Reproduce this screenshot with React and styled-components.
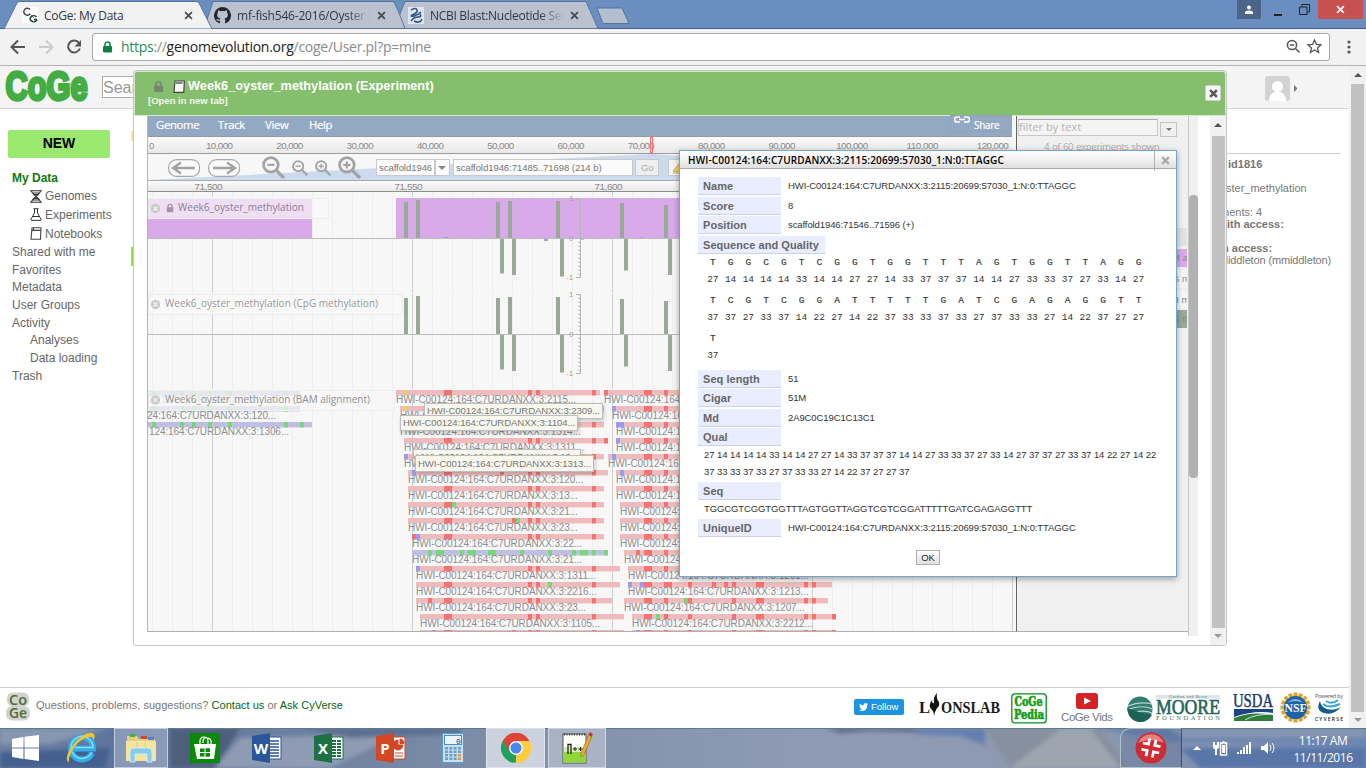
import React from "react";
import styled, { createGlobalStyle, css } from "styled-components";

const sans = '"Liberation Sans", Arial, sans-serif';
const ui = '"Open Sans", "Noto Sans", sans-serif';
const mono = '"Liberation Mono", monospace';

const Global = createGlobalStyle`
  *{box-sizing:border-box}
  html,body{margin:0;padding:0;overflow:hidden}
  body{font-family:${sans};background:#fff}
  svg{display:block;flex:none}
`;

const Screen = styled.div`
  position: relative; width: 1366px; height: 768px; overflow: hidden;
  display: flex; flex-direction: column; background: #fff; white-space: nowrap;
`;

/* ---------- browser chrome ---------- */
const TabStrip = styled.div`
  height: 29px; background: #6a8ebf; border-bottom: 1px solid #3f5f8d; display: flex; position: relative; flex: none;
`;
const TabShapes = styled.svg`position: absolute; left: 0; top: 0;`;
const Tabs = styled.div`position: relative; display: flex; padding-left: 22px; height: 29px; align-items: center;`;
const Tab = styled.div`
  width: ${(p) => p.$w}px; display: flex; align-items: center; gap: 6px; padding-top: 1px;
  font: 12px ${ui}; letter-spacing: ${(p) => p.$ls || 0}px; color: #33373d;
`;
const TabTitle = styled.span`
  width: ${(p) => p.$w}px; overflow: hidden;
  ${(p) => p.$fade && css`-webkit-mask-image: linear-gradient(90deg, #000 82%, transparent 100%);`}
`;
const WindowControls = styled.div`margin-left: auto; display: flex; padding-right: 3px; position: relative;`;
const WinBtn = styled.div`
  width: ${(p) => p.$w}px; height: 19px; display: flex; align-items: center; justify-content: center; background: ${(p) => p.$bg || "none"};
`;
const Toolbar = styled.div`
  height: 37px; flex: none; background: #f2f2f2; border-bottom: 1px solid #b4b4b4;
  display: flex; align-items: center; padding: 0 12px 1px 10px;
`;
const NavIcons = styled.div`display: flex; gap: 12px; width: 82px;`;
const Omnibox = styled.div`
  width: 1238px; height: 28px; border: 1px solid #a9a9a9; border-radius: 3px; background: #fff;
  display: flex; align-items: center; padding: 0 7px 0 10px;
`;
const Url = styled.div`font: 14px ${ui}; letter-spacing: -0.27px; color: #8a8a8a; margin-left: 9px; flex: 1;
  b { font-weight: 400; color: #222; } i { font-style: normal; color: #2f8a5a; }`;
const Dots = styled.div`margin-left: auto; padding-right: 3px;`;

/* ---------- page ---------- */
const Page = styled.div`height: 662px; display: flex; flex: none;`;
const PageMain = styled.div`width: 1349px; display: flex; flex-direction: column;`;
const Header = styled.div`
  height: 43px; flex: none; background: #f4f4f4; border-bottom: 1px solid #d4d4d4; display: flex; align-items: center; padding-left: 4px;
`;
const SearchBox = styled.div`
  width: 120px; height: 22px; margin: 0 0 1px 12px; border: 1px solid #adadad; background: #fff; font: 16px/21px ${sans}; color: #999;
`;
const Account = styled.div`margin-left: auto; padding: 3px 52px 0 0; display: flex; gap: 4px; align-items: center;`;
const Content = styled.div`height: 578px; display: flex;`;
const Sidebar = styled.div`width: 131px; padding: 21px 0 0 8px;`;
const NewButton = styled.div`
  width: 102px; height: 28px; border-radius: 2px; background: #9be86e; font: bold 14px/27px ${sans}; text-align: center; color: #000; margin-bottom: 11px;
`;
const MenuItem = styled.div`
  height: ${(p) => (p.$tall ? 18.8 : 17.7)}px; display: flex; align-items: center; gap: 3px; padding-left: ${(p) => [4, 22][p.$level]}px;
  font: ${(p) => (p.$active ? "bold" : "normal")} 12px ${sans}; color: ${(p) => (p.$active ? "#117a11" : "#666")};
`;
const Gutter = styled.div`width: 3px; padding-top: 22px; display: flex; flex-direction: column; gap: 106px;`;
const Chip = styled.div`height: ${(p) => p.$h}px; background: ${(p) => p.$c};`;
const InfoPane = styled.div`
  margin-left: auto; width: 123px; padding: 44px 8px 0 0; overflow: hidden; font: 11px/12px ${sans}; color: #777;
`;
const InfoRule = styled.div`height: 1px; background: #cfcfcf; margin-bottom: 4px;`;
const InfoLine = styled.div`height: 12px; margin-left: ${(p) => p.$x || 0}px; font-weight: ${(p) => (p.$b ? 700 : 400)}; letter-spacing: ${(p) => p.$ls || 0}px;`;
const Footer = styled.div`
  height: 41px; border-top: 1px solid #cfcfcf; display: flex; align-items: center; padding: 0 0 3px 6px;
`;
const FooterText = styled.div`
  width: 824px; font: 11px ${sans}; letter-spacing: 0.02px; color: #777; padding: 0 0 3px 6px; a { color: #0a660a; }
`;
const Sponsors = styled.div`display: flex; align-items: flex-start; height: 33px;`;
const Slot = styled.div`width: ${(p) => p.$w}px; padding-top: ${(p) => p.$t || 0}px;`;
const Follow = styled.div`
  width: 50px; height: 16px; border-radius: 2px; background: #1b95e0; color: #fff; font: 9.5px/16px ${sans};
  display: flex; align-items: center; gap: 3px; padding-left: 5px;
`;
const PageScroll = styled.div`width: 17px; background: #f1f1f1; display: flex; flex-direction: column; align-items: center; padding: 7px 0 6px 0;`;
const Thumb = styled.div`width: ${(p) => p.$w}px; flex: 1; margin: ${(p) => p.$m}; background: ${(p) => p.$c || "#c1c1c1"};`;

/* ---------- experiment dialog ---------- */
const Dialog = styled.div`
  position: absolute; left: 133px; top: 70px; width: 1094px; height: 576px; background: #fff;
  border: 1px solid #c6c6c6; border-radius: 3px; display: flex; flex-direction: column;
`;
const DialogHead = styled.div`
  height: 45px; flex: none; background: #85be6c; border: 1px solid #d5e8cc; border-radius: 3px 3px 0 0;
  display: flex; justify-content: space-between; padding: 6px 4px 0 13px; color: #fff;
`;
const DialogTitle = styled.div`display: flex; align-items: center; font: bold 12.75px/16px ${sans}; padding-left: 6px; height: 16px;`;
const TitleGap = styled.span`width: ${(p) => p.$w}px;`;
const NewTabLink = styled.div`font: bold 9.5px/14px ${sans}; color: #f1f8ec;`;
const CloseBtn = styled.div`
  width: 16px; height: 16px; margin-top: 7px; border: 1px solid #d0d0d0; border-radius: 2px; background: #f5f5f5; display: flex; align-items: center; justify-content: center;
`;
const DialogBody = styled.div`flex: 1; display: flex; padding-left: 13px; height: 529px;`;
const Browser = styled.div`width: 870px; border-left: 1px solid #b5b5b5; height: 516px; border-bottom: 1px solid #b0b0b0; border-right: 1px solid #666; background: #f7f7f7;`;
const MenuBar = styled.div`
  width: 864px; height: 21px; background: #93a9c3; border-bottom: 1px solid #999; display: flex; align-items: center; padding: 0 0 3px 8px;
  font: 11.3px ${ui}; letter-spacing: -.3px; color: #fff;
`;
const MenuEntry = styled.span`width: ${(p) => p.$w}px; -webkit-text-stroke: .2px #fff;`;
const Share = styled.span`
  margin-left: auto; width: 62px; height: 17px; border: 1px solid #8ca2bd; margin-bottom: 3px; font-size: 10px; display: flex; gap: 4px; padding: 0 0 0 3px; line-height: 18px; -webkit-text-stroke: .2px #fff;
`;
const NavBox = styled.div`position: relative; height: 27px; border-bottom: 1px solid #aaa; overflow: hidden;`;
const Highlight = styled.svg`position: absolute; left: 0; top: 0;`;
const NavRow = styled.div`position: relative; display: flex; align-items: center; height: 26px; padding: 1px 0 0 20px;`;
const Magnifiers = styled.div`display: flex; align-items: center; width: 114px; margin-left: 14px; gap: 7px; flex: none;`;
const Field = styled.div`
  width: ${(p) => p.$w}px; height: 17px; flex: none; margin-right: ${(p) => p.$mr || 0}px; background: ${(p) => p.$bg || "#fbfbfb"}; border: 1px solid #c9c9c9;
  font: 9.5px/15px ${sans}; color: ${(p) => p.$c || "#777"}; padding-left: ${(p) => p.$pl || 2}px; display: flex; align-items: center; letter-spacing: -.05px; white-space: nowrap;
`;
const TrackSelector = styled.div`width: 171px; height: 516px; background: #f0f0f0; border-bottom: 1px solid #b0b0b0; padding: 3px 0 0 1px;`;
const FilterRow = styled.div`display: flex; gap: 2px; align-items: flex-start;`;
const FilterInput = styled.div`width: 140px; height: 17px; border: 1px solid #c8c8c8; border-top-color:#aaa; background: #f4f4f4; font: 11px/14px ${ui}; letter-spacing: .05px; color: #b5b5b5;`;
const DropBtn = styled.div`width: 17px; height: 15px; margin-top: 3px; border: 1px solid #c4c4c4; display: flex; align-items: center; justify-content: center;`;
const Shown = styled.div`font: 9.8px/13px ${ui}; color: #aaa; padding: 3px 0 0 26px; margin-bottom: 1px; letter-spacing: -.43px; word-spacing: .6px;`;
const FacetRow = styled.div`
  height: 18px; margin: ${(p) => p.$mt}px 1px 0 154px; background: ${(p) => p.$bg}; font: 9.5px/18px ${sans}; color: #8a8a8a; overflow: hidden;
`;
const InnerScroll = styled.div`width: 10px; height: 520px; background: #f0f0f0; border-left: 1px solid #c8c8c8; padding-top: 79px; display: flex; flex-direction: column;`;
const InnerThumb = styled.div`height: 283px; background: #b1b1b1; border-radius: 4px;`;
const DialogScroll = styled.div`width: 16px; margin-left: auto; background: #f1f1f1; display: flex; flex-direction: column; align-items: center; padding: 7px 0 7px;`;

/* ---------- feature tooltips ---------- */
const Tip = styled.div`
  position: absolute; left: ${(p) => p.$x}px; top: ${(p) => p.$y}px; width: ${(p) => p.$w}px; height: ${(p) => p.$h || 16}px; overflow: hidden;
  background: #f7f7ee; border: 1px solid #bdbdbd; box-shadow: 1px 2px 4px rgba(0,0,0,.2); font: 9.6px/${(p) => p.$lh || 14}px ${sans}; letter-spacing: -.09px; color: #777; padding-left: 2px;
`;

/* ---------- feature detail popup ---------- */
const Popup = styled.div`
  position: absolute; left: 679px; top: 150px; width: 498px; height: 427px; background: #fff; border: 1px solid #74a5cc;
  box-shadow: 0 2px 6px rgba(0,0,0,.35); display: flex; flex-direction: column;
`;
const PopupHead = styled.div`
  height: 18px; flex: none; border-bottom: 1px solid #a9a9a9; background: linear-gradient(#fff, #f3f3f3 45%, #dedede);
  display: flex; justify-content: space-between; padding-left: 8px; font: 600 10px/19px ${ui}; color: #000; letter-spacing: .14px;
`;
const PopupClose = styled.div`width: 22px; height: 20px; border-left: 1px solid #b0b0b0; padding: 5px 0 0 6px;`;
const PopupBody = styled.div`padding: 8px 0 0 18px; display: flex; flex-direction: column; align-items: flex-start;`;
const Row = styled.div`display: flex; height: ${(p) => p.$h}px; margin-top: ${(p) => p.$mt || 0}px;`;
const Key = styled.div`
  width: ${(p) => p.$w || 83}px; height: 18px; background: #e9edff; border-bottom: 1px solid #cdd2e4; font: bold 11px/18px ${sans};
  letter-spacing: .05px; color: #666; padding-left: 5px;
`;
const Value = styled.div`font: 9.5px/17px ${sans}; letter-spacing: -.1px; color: #333; padding-left: 7px;`;
const Block = styled.div`font: 9.5px/17px ${sans}; letter-spacing: ${(p) => p.$ls}px; color: #333; padding-left: 6px; height: ${(p) => p.$h}px;`;
const SeqGrid = styled.div`
  display: grid; grid-template-columns: repeat(25, 17.74px); grid-template-rows: 17px 17px; align-content: start; padding: 0 0 0 6px; text-align: center; height: 38px; color: #333;
`;
const Base = styled.span`grid-row: 1; font: 9.5px/17px ${mono}; -webkit-text-stroke: .15px #333;`;
const Qv = styled.span`grid-row: 2; font: 9.5px/17px ${mono};`;
const Ok = styled.div`
  width: 24px; height: 15px; margin: 12px 0 0 218px; border: 1px solid #b0b0b0; background: linear-gradient(#fff,#e0e0e0); font: 9.5px/14px ${sans}; text-align: center; color: #222;
`;

/* ---------- taskbar ---------- */
const Taskbar = styled.div`position: relative; height: 40px; flex: none; overflow: hidden; background: #8493ad;`;
const Wallpaper = styled.svg`position: absolute; left: 0; top: 0;`;
const TaskRow = styled.div`position: relative; display: flex; height: 40px;`;
const Task = styled.div`
  width: ${(p) => p.$w}px; display: flex; align-items: center; justify-content: center; margin-right: ${(p) => p.$mr || 0}px; border: 1px solid transparent;
  ${(p) => p.$open && css`background: rgba(255,255,255,${p.$open}); border-color: rgba(235,240,248,.6);`}
`;
const TrayApp = styled.div`
  width: 62px; height: 40px; margin-right: 4px; display: flex; align-items: center; justify-content: center; border: 1px solid rgba(235,240,248,.55);
  border-right-color: rgba(40,55,80,.7); border-radius: 10px 0 0 0; background: rgba(60,80,115,.18);
`;
const Tray = styled.div`margin-left: auto; display: flex; align-items: center;`;
const Clock = styled.div`font: 12px/17px ${ui}; letter-spacing: -.45px; color: #fff; text-align: center; width: 62px; margin: 1px 12px 0 12px;`;

/* ---------- small drawings ---------- */
const Arrow = ({ d = "down", c = "#555", s = 8 }) => {
  const pts = { down: "0,0 8,0 4,4", up: "0,4 8,4 4,0", right: "0,0 4,4 0,8" }[d];
  return <svg width={d === "right" ? s / 2 : s} height={d === "right" ? s : s / 2} viewBox={d === "right" ? "0 0 4 8" : "0 0 8 4"}><polygon points={pts} fill={c} /></svg>;
};
const Cross = ({ s = 8, c = "#666", w = 2 }) => (
  <svg width={s} height={s} viewBox="0 0 8 8"><path d="M1 1L7 7M7 1L1 7" stroke={c} strokeWidth={w} /></svg>
);
const Lock = ({ w = 9, h = 11, c = "#77856f" }) => (
  <svg width={w} height={h} viewBox="0 0 9 11"><rect x="0" y="4.5" width="9" height="6.5" rx="1" fill={c} /><path d="M2 5V3a2.5 2.4 0 0 1 5 0v2" fill="none" stroke={c} strokeWidth="1.5" /></svg>
);
const GenomeIcon = () => (
  <svg width="12" height="13" viewBox="0 0 12 13"><path d="M0 .7H12M0 12.3H12M1.5 1C2 5 10 8 10.5 12M10.5 1C10 5 2 8 1.5 12M2.5 3H9.5M2.5 10H9.5M4 4.5h4M4 8.5h4" stroke="#333" strokeWidth="1.1" fill="none" /></svg>
);
const FlaskIcon = () => (
  <svg width="12" height="13" viewBox="0 0 12 13"><path d="M3.5 .7H8.5M4.5 1V5L.8 11.5Q.8 12.4 2 12.4H10Q11.2 12.4 11.2 11.5L7.5 5V1M2.8 8.5H9.2" stroke="#333" fill="none" /></svg>
);
const BookIcon = () => (
  <svg width="12" height="13" viewBox="0 0 12 13"><path d="M2 .8H11L10.5 12.2H1ZM2 3.4H10.5M3.5 1V3.4" stroke="#444" strokeWidth="1.1" fill="none" /></svg>
);
const BookSolid = () => (
  <svg width="12" height="13" viewBox="0 0 12 13"><path d="M2 1H11.3L10.8 12.3H1Z" fill="#fafafa" stroke="#444" strokeWidth="1.2" /><path d="M3 3H9.5" stroke="#444" strokeWidth="1.3" /></svg>
);
const Magnifier = ({ s, plus }) => (
  <svg width={s} height={s} viewBox="0 0 22 22">
    <circle cx="8.5" cy="8.5" r="7" fill="none" stroke="#a3a3a3" strokeWidth="2.6" />
    <path d={`M5 8.5H12${plus ? "M8.5 5V12" : ""}`} stroke="#a3a3a3" strokeWidth="2" /><path d="M13.5 13.5L21 21" stroke="#a3a3a3" strokeWidth="3" />
  </svg>
);
const PanArrow = ({ flip }) => (
  <svg width="40" height="18" viewBox="0 0 40 18"><rect x=".6" y=".6" width="31" height="16.8" rx="8" fill="#fafafa" stroke="#a8a8a8" strokeWidth="1.2" />
    <path d="M5 9H27M13 3.5L5 9L13 14.5" transform={flip ? "translate(32 0) scale(-1 1)" : undefined} stroke="#a3a3a3" strokeWidth="2.4" fill="none" /></svg>
);

const T = ({ x, y, w, s = 10, f = ui, c = "#8a8a8a", b, children, ...r }) => (
  <text x={x} y={y} fontSize={s} fontFamily={f} fill={c} fontWeight={b} textLength={w} {...r}>{children}</text>
);

/* ---------- rulers and tracks ---------- */
const Overview = () => (
  <svg width="864" height="17">
    <defs><linearGradient id="rule" x2="0" y2="1"><stop offset="0" stopColor="#fafafa" /><stop offset="1" stopColor="#e9e9e9" /></linearGradient></defs>
    <rect width="864" height="16" fill="url(#rule)" /><rect y="16" width="864" height="1" fill="#9c9c9c" />
    <T x="1" y="12" f={sans} s="9.5">0</T>
    {Array.from({ length: 12 }, (_, i) => (
      <T key={i} x={71.5 + i * 70.3} y="12" w={i > 8 ? 32 : 27} s="9.8" f={sans} textAnchor="middle">{`${(i + 1) * 10},000`}</T>
    ))}
    <rect x="502.5" y=".5" width="2" height="15.5" fill="none" stroke="#fb6d6d" />
  </svg>
);
const Ruler = () => (
  <svg width="868" height="11">
    <rect width="868" height="10" fill="url(#rule)" /><rect y="10" width="868" height="1" fill="#8f8f8f" />
    {["71,500", "71,550", "71,600"].map((l, i) => <T key={l} x={60.5 + i * 200} y="9.3" w="28" s="9.8" f={sans} textAnchor="middle">{l}</T>)}
  </svg>
);

const upBars = [[404, 202], [416, 200], [496, 202], [508, 201], [556, 201], [620, 203], [664, 205]];
const downBars = [[500, 273.5], [512, 275], [560, 276.5], [624, 270.5], [668, 275]];
const Methylation = ({ dy }) => (
  <g transform={`translate(0 ${dy})`}>
    {upBars.map(([x, y]) => <rect key={x} x={x} y={y} width="4" height={238 - y} fill="#98a997" />)}
    {downBars.map(([x, y]) => <rect key={x} x={x} y="239" width="4" height={y - 239} fill="#98a997" />)}
    <rect x="148" y="238" width="869" height="1" fill="#bdbdbd" />
    <g stroke="#b4b4b4"><path d="M580.5 198.5V277.5M576 198.5h5M576 238.5h5M576 277.5h5" fill="none" />
      {Array.from({ length: 19 }, (_, i) => <path key={i} d={`M578.5 ${202.5 + i * 4}h2`} />)}</g>
    <T x="569" y="201" s="8" f={sans} c="#b99a80">1</T><T x="569" y="241" s="8" f={sans} c="#a8a0a8">0</T><T x="566" y="280" s="8" f={sans} c="#b99a80">-1</T>
  </g>
);

const P = "#eebcbc", V = "#bfbfe4", R = "#f97272", G = "#76d876", B = "#9a9af5", Y = "#e3d070";
const reds1 = [[444, 8], [528, 4], [536, 4], [592, 4]];
const reds2 = [[644, 8], [664, 4], [756, 8], [804, 4], [812, 4]];
const col1 = [
  [396, 600, "2115", [[404, 4, Y]]], [400, 604, "2309", [[404, 4, Y]]], [400, 604, "1314", []], [404, 608, "1311", [[604, 4, R]]],
  [404, 604, "1313", [[404, 4, B]]], [408, 608, "120", [[412, 4, B], [500, 4, R]]], [408, 604, "13", []], [408, 604, "21", [[452, 4, G]]],
  [408, 604, "23", [[512, 4, R], [516, 4, G]]], [412, 604, "22", [[412, 4, R], [416, 4, B]]],
  [412, 608, "21", [[428, 4, G], [436, 8, G], [460, 4, G], [468, 8, G], [488, 8, G], [520, 4, G], [548, 4, G], [572, 4, G], [580, 8, G], [592, 4, G], [604, 4, G]], V],
  [416, 620, "1311", [[416, 4, B]]], [416, 620, "2216", [[548, 4, G]]], [416, 612, "23", [[428, 4, R]]], [420, 624, "1105", []], [420, 624, "", [[432, 4, B], [512, 4, R]]],
];
const col2 = [
  [604, 800, "1101", [[604, 4, R]]], [612, 812, "1102", [[612, 4, B]]], [616, 820, "1106", [[616, 8, B]]], [616, 820, "1108", [[616, 4, B]]],
  [608, 812, "1204", [[612, 4, B]]], [616, 820, "1205", [[620, 4, B]]], [616, 820, "1206", []], [620, 824, "1207", []], [620, 824, "1208", []], [620, 824, "1209", []],
  [624, 828, "1210", [[636, 4, R]]], [628, 832, "1201", []], [628, 832, "1213", [[628, 4, B], [640, 4, B], [668, 4, R], [688, 4, R], [712, 4, R], [724, 4, R], [732, 4, R]]],
  [624, 828, "1207", [[684, 4, G], [688, 4, R], [732, 4, R]]], [632, 836, "2212", [[656, 4, G], [688, 4, R], [732, 4, R], [832, 4, R]]], [632, 836, "", [[636, 4, B], [688, 4, R], [732, 4, R], [832, 4, R]]],
];
const Reads = ({ rows, reds }) => rows.map(([a, b, id, marks, color], k) => {
  const y = 390 + k * 16;
  return (
    <g key={k}>
      <rect x={a} y={y} width={b - a} height="5.4" fill={color || P} />
      {!color && reds.map(([x, w]) => <rect key={x} x={x} y={y} width={w} height="5.4" fill={R} />)}
      {marks.map(([x, w, c], i) => <rect key={i} x={x} y={y} width={w} height="5.4" fill={c} />)}
      {id && <text x={a} y={y + 12.8} fontFamily={sans} fontSize="10" fill="#8f8f8f" letterSpacing="-.08">{`HWI-C00124:164:C7URDANXX:3:${id}...`}</text>}
    </g>
  );
});
const greens = [152, 180, 192, 208, 228, 284];
const Disc = ({ y }) => (
  <g><circle cx="155.5" cy={y} r="4.5" fill="#c9c6cb" /><path d={`M153.5 ${y - 2}l4 4m0-4l-4 4`} stroke="#f4f4f4" strokeWidth="1.3" /></g>
);
const Tracks = () => (
  <svg width="868" height="439" viewBox="148 192 868 439">
    <rect x="148" y="192" width="868" height="439" fill="#f7f7f7" />
    {Array.from({ length: 44 }, (_, i) => 152 + i * 20).map((x) => (
      <rect key={x} x={x} y="192" width="1" height="439" fill={(x - 212) % 200 === 0 ? "#cfcfcf" : "#eeeeee"} />
    ))}
    <path d="M148 197.5H1016M148 293.5H1016M148 389.5H1016" stroke="#f7f7f7" />
    <rect x="148" y="198" width="164" height="40" fill="#d8aaea" /><rect x="396" y="198" width="300" height="40" fill="#d8aaea" />
    <Methylation dy={0} /><Methylation dy={96} />
    <rect x="444" y="237" width="4" height="1" fill="#9d9df0" /><rect x="544" y="239" width="4" height="2" fill="#9d9df0" /><rect x="581" y="239" width="3" height="1" fill="#b5b5f0" />
    <rect x="640" y="237" width="4" height="1" fill="#b9a0f0" />
    <rect x="148.5" y="198.5" width="180" height="20" fill="#f7f7f7" fillOpacity=".68" stroke="#eee" />
    <rect x="148.5" y="294.5" width="254" height="20" fill="#f7f7f7" fillOpacity=".68" stroke="#eee" />
    <Disc y={208.5} /><Disc y={304.5} />
    <svg x="166.5" y="203.5" width="7" height="9" viewBox="0 0 9 11"><rect y="4.5" width="9" height="6.5" fill="#a193a8" /><path d="M2 5V3a2.5 2.4 0 0 1 5 0v2" fill="none" stroke="#a193a8" strokeWidth="1.6" /></svg>
    <T x="178" y="211.3" w="126" s="10" c="#8b7d93">Week6_oyster_methylation</T>
    <T x="165" y="307.3" w="213" s="10" c="#999">Week6_oyster_methylation (CpG methylation)</T>
    {[[0, 300], [1, 300], [2, 312]].map(([k, e]) => (
      <g key={k}><rect x="148" y={390 + k * 16} width={e - 148} height="5.4" fill={V} />
        {greens.map((x) => <rect key={x} x={x} y={390 + k * 16} width="4" height="5.4" fill={G} />)}</g>
    ))}
    <rect x="300" y="422" width="4" height="5.4" fill={G} />
    <T x="148" y="403" w="118" f={sans} c="#aaa">24:164:C7URDANXX:3:12...</T>
    <rect x="148.5" y="390.5" width="246" height="20" fill="#f7f7f7" fillOpacity=".72" stroke="#eee" />
    <Disc y={400} />
    <T x="165" y="403.3" w="205" s="10" c="#909090">Week6_oyster_methylation (BAM alignment)</T>
    <T x="147" y="418.8" w="129" f={sans} c="#8f8f8f">24:164:C7URDANXX:3:120...</T>
    <T x="149" y="434.8" w="140" f={sans} c="#8f8f8f">124:164:C7URDANXX:3:1306...</T>
    <Reads rows={col1} reds={reds1} /><Reads rows={col2} reds={reds2} />
  </svg>
);

/* ---------- logos ---------- */
const CogeLogo = () => (
  <svg width="86" height="42" viewBox="0 0 86 42"><text transform="translate(1.5 34) scale(1 1.12)" fontFamily={sans} fontWeight="700" fontSize="36" textLength="82" lengthAdjust="spacingAndGlyphs" fill="#43ad43" stroke="#43ad43" strokeWidth="3">CoGe</text></svg>
);
const CogeBadge = () => (
  <svg width="24" height="29" viewBox="0 0 24 29"><rect x="1" y=".5" width="22" height="14" rx="6" fill="#d2d2d2" /><rect x="0" y="14" width="24" height="14.5" rx="6" fill="#d2d2d2" />
    <g fontFamily={ui} fontWeight="600" fontSize="14" fill="#4b6e35"><text x="3" y="13" textLength="18" lengthAdjust="spacingAndGlyphs">Co</text><text x="3" y="26" textLength="18" lengthAdjust="spacingAndGlyphs">Ge</text></g></svg>
);
const Lions = () => (
  <svg width="82" height="30" viewBox="0 0 82 30"><g fontFamily='"Liberation Serif",serif' fontWeight="700" fontSize="17" fill="#1a1a1a"><text x="0" y="20" textLength="11" lengthAdjust="spacingAndGlyphs">L</text><text x="22" y="20" textLength="59" lengthAdjust="spacingAndGlyphs">ONSLAB</text></g>
    <path d="M15 23Q15 18 12 16Q9 12 13 7Q13 11 15 10Q14 4 18 0Q17 6 20 9Q21 13 18 15Q16 18 15 23Z" fill="#111" /></svg>
);
const Pedia = () => (
  <svg width="36" height="31" viewBox="0 0 36 31"><rect x=".8" y=".8" width="34.4" height="29" rx="3" fill="#fff" stroke="#0a8a1f" strokeWidth="1.3" />
    <g fontFamily='"DejaVu Serif",serif' fontWeight="700" fill="#11a021" stroke="#11a021" strokeWidth=".7" fontSize="12"><text x="3.5" y="13" textLength="28" lengthAdjust="spacingAndGlyphs">CoGe</text><text x="3" y="25.5" textLength="30" lengthAdjust="spacingAndGlyphs">Pedia</text></g></svg>
);
const Vids = () => (
  <svg width="54" height="30" viewBox="0 0 54 30"><rect x="16" y="0" width="22" height="16" rx="3" fill="#d42226" /><path d="M24 4.5L31 8L24 11.5Z" fill="#fff" /><T x="1" y="27.500" w="52" s="11.5" f={sans} c="#777">CoGe Vids</T></svg>
);
const Moore = () => (
  <svg width="94" height="30" viewBox="0 0 94 30"><circle cx="13" cy="15" r="12.5" fill="#337d72" /><path d="M1 12Q13 7 25 10M0 16Q13 10 26 15M1 20Q14 15 26 19" stroke="#b9d6cf" fill="none" strokeWidth="1.2" /><path d="M0 14L15 19L25 21Q20 29 12 28Q2 27 0 14" fill="#1d6157" />
    <rect x="29" y="1" width="64" height="3.6" fill="#dfe8e6" /><T x="42" y="4" w="38" s="4" c="#466" f='"Liberation Serif",serif'>Gordon and Betty</T>
    <text x="29" y="19.5" fontFamily='"Liberation Serif",serif' fontSize="20" fill="#25655c" stroke="#25655c" strokeWidth=".6" textLength="64" lengthAdjust="spacingAndGlyphs">MOORE</text>
    <T x="29" y="25.5" w="64" s="6.5" c="#46776f" f='"Liberation Serif",serif'>FOUNDATION</T></svg>
);
const Usda = () => (
  <svg width="41" height="29" viewBox="0 0 41 29"><text x="0" y="13" fontFamily='"Liberation Serif",serif' fontSize="18" fill="#16366f" stroke="#16366f" strokeWidth=".4" textLength="40" lengthAdjust="spacingAndGlyphs">USDA</text>
    <path d="M1 15H40V19Q22 16 1 23Z" fill="#1c4683" /><path d="M1 24Q20 17 40 21V27H1Z" fill="#2f7d3d" /><path d="M12 26Q22 20 38 20" stroke="#fff" fill="none" strokeWidth=".8" /></svg>
);
const Nsf = () => (
  <svg width="31" height="31" viewBox="-15.5 -15.5 31 31">
    {Array.from({ length: 16 }, (_, i) => <rect key={i} x="-2" y="-15" width="4" height="6" fill="#dba62c" transform={`rotate(${i * 22.5})`} />)}
    <circle r="11.5" fill="#1e63a8" /><path d="M-8-5Q0-12 8-5Q0-8-8-5" fill="#8dbce0" /><text x="-11" y="4.5" fontSize="12" fontFamily='"Liberation Serif",serif' fontWeight="700" fill="#fff" textLength="22" lengthAdjust="spacingAndGlyphs">NSF</text></svg>
);
const Cyverse = () => (
  <svg width="29" height="30" viewBox="0 0 29 30"><T x="0" y="5" w="28" s="5.5" c="#555">Powered by</T><path d="M5 8Q0 17 9 20Q18 23 26 14Q19 18 12 16Q6 14 5 8" fill="#1a5c8a" /><path d="M8 11Q14 16 25 11M11 8Q17 12 23 7" stroke="#37a6d2" strokeWidth="2" fill="none" />
    <T x="0" y="28" w="28" s="5" c="#222" b="600">CYVERSE</T></svg>
);

/* ---------- taskbar icons ---------- */
const officeMarks = {
  lines: (c) => <path d="M18 8H27M18 11H27M18 14H27M18 17H27M18 20H27M18 23H27" stroke={c} strokeWidth="1.4" />,
  grid: (c) => <path d="M18 8H27M18 11H27M18 14H27M18 17H27M18 20H27M18 23H27" stroke={c} strokeWidth="1.8" strokeDasharray="4 1" />,
  pie: (c) => <path d="M22 7a5 5 0 1 0 5 5h-5zM24 6v4.5h4A4.5 4.5 0 0 0 24 6M19 20h8M19 23h8" fill={c} stroke={c} />,
};
const Office = ({ c, l, d = "lines" }) => (
  <svg width="30" height="30" viewBox="0 0 30 30"><rect x="16" y="4" width="13" height="22" fill="#fff" stroke={c} />
    {officeMarks[d](c)}
    <path d="M0 3L18 0V30L0 27Z" fill={c} /><text x="9" y="20.5" fontFamily={ui} fontWeight="700" fontSize="15" fill="#fff" textAnchor="middle">{l}</text></svg>
);
const Ie = () => (
  <svg width="32" height="32" viewBox="0 0 32 32"><path d="M27 21A11 11 0 1 1 28 16.5H9" fill="none" stroke="#2fb0ec" strokeWidth="6" /><path d="M27 20A11 11 0 1 1 28 15.5H10" fill="none" stroke="#8bdcfa" strokeWidth="1.5" /><path d="M4 31Q-2 26 8 13Q18 0 27 1Q32 2 28 9Q29 4 23 5Q14 7 7 19Q3 27 4 31" fill="#f4c52b" /></svg>
);
const Folder = () => (
  <svg width="32" height="30" viewBox="0 0 32 30"><path d="M2 3H12L14 6H30V27H2Z" fill="#e8cf7c" /><rect x="5" y="1" width="5" height="3" fill="#3fae3f" /><rect x="16" y="3" width="6" height="3" fill="#d8432f" /><rect x="23" y="4" width="6" height="3" fill="#4a83cf" /><path d="M1 8H31V28H1Z" fill="#f5e3a0" /><path d="M12 9V20M20 9V20" stroke="#e2cb80" /><path d="M5 29V19Q5 15 9 15H23Q27 15 27 19V29H22V21H10V29Z" fill="#86cdec" stroke="#c9ecfa" /></svg>
);
const Store = () => (
  <svg width="30" height="30" viewBox="0 0 30 30"><rect width="30" height="30" fill="#0a8a08" /><path d="M10 11V8Q10 4 14 4T18 8V11M13 10V7Q14 4 18 5T21 11" fill="none" stroke="#fff" strokeWidth="1.2" /><path d="M4 11H26L24 26H7Z" fill="#fff" /><path d="M10 15.5H14.5V19H10ZM15.5 15.3H20V19H15.5ZM10 20H14.5V23.5H10ZM15.5 20H20V23.7H15.5Z" fill="#0a8a08" /></svg>
);
const Calc = () => (
  <svg width="22" height="30" viewBox="0 0 22 30"><rect x=".5" y=".5" width="21" height="29" rx="1" fill="#c6e0f3" stroke="#5b9cc9" /><rect x="2.5" y="2.5" width="17" height="9" fill="#e9f5fd" stroke="#4d8fc0" /><text x="14" y="10.5" fontSize="8" fontFamily={mono} fill="#235">0</text>
    {[0, 1, 2, 3].map((r) => [0, 1, 2, 3].map((c) => <rect key={`${r}${c}`} x={3 + c * 4.3} y={14 + r * 3.5} width="3" height="2.5" fill={c === 3 && r > 1 ? "#e59b3a" : "#6d9fc4"} />))}</svg>
);
const Chrome = () => (
  <svg width="30" height="30" viewBox="-15 -15 30 30"><path d="M0 0L-13 -7.5A15 15 0 0 1 13 -7.5Z" fill="#de4437" /><path d="M0 0L13 -7.5A15 15 0 0 1 0 15Z" fill="#fdcd3f" /><path d="M0 0L0 15A15 15 0 0 1 -13 -7.5Z" fill="#1fa05c" /><path d="M0 -7H13.2L13 -7.5A15 15 0 0 0 -13 -7.5L-6 3.5Z" fill="#de4437" /><path d="M6 3.5L-1 15A15 15 0 0 0 13.2 -7H0Z" fill="#fdcd3f" /><circle r="7" fill="#f5f5f5" /><circle r="5.5" fill="#4787ee" /></svg>
);
const NotepadPP = () => (
  <svg width="32" height="32" viewBox="0 0 32 32"><rect x="2" y="2" width="23" height="29" fill="#fbfdf6" stroke="#555" /><path d="M2.5 20H24.5V30.5H2.5Z" fill="#8fd63a" /><path d="M3 15H24V20H3Z" fill="#d6efb0" /><path d="M3 2.5H24" stroke="#333" strokeWidth="2" strokeDasharray="1 1.5" /><path d="M7 22V12.5H10V22" stroke="#222" strokeWidth="1.3" fill="none" /><path d="M12 17H16M14 15V19M17.5 17H21.5M19.5 15V19" stroke="#222" fill="none" /><path d="M28 2L31 4L23 23L20 25L20 21Z" fill="#e9a93a" stroke="#9a6a1c" strokeWidth=".6" /><path d="M27.5 3L29 0L32 2L30.5 5Z" fill="#c2372f" /></svg>
);
const RedBadge = () => (
  <svg width="34" height="34" viewBox="-17 -17 34 34"><circle r="15.5" fill="#cf2b35" /><path d="M-13-5A14 14 0 0 1 13-5Q0-11-13-5" fill="#e97f84" />
    {[12, 102, 192, 282].map((a) => <path key={a} d="M-9 -3.2H-3.2V-9" transform={`rotate(${a})`} fill="none" stroke="#fff" strokeWidth="2.8" />)}</svg>
);

const line1 = "TGGCGTCGGTGGTTTAGTGGTTAGG", line2 = "TCGTCGGATTTTTGATCGAGAGGTT";
const q1 = "27 14 14 14 14 33 14 14 27 27 14 33 37 37 37 14 14 27 33 33 37 27 33 14 27".split(" ");
const q2 = "37 37 27 33 37 14 22 27 14 22 37 33 33 37 33 27 37 33 33 27 14 22 37 27 27".split(" ");
const Bases = ({ seq, q }) => (
  <SeqGrid>{[...seq].map((b, i) => <Base key={i}>{b}</Base>)}{q.map((v, i) => <Qv key={i}>{v}</Qv>)}</SeqGrid>
);
const readId = "HWI-C00124:164:C7URDANXX:3:2115:20699:57030_1:N:0:TTAGGC";

const menu = [
  ["My Data", 0, null, true], ["Genomes", 1, <GenomeIcon />], ["Experiments", 1, <FlaskIcon />], ["Notebooks", 1, <BookIcon />], ["Shared with me", 0], ["Favorites", 0],
  ["Metadata", 0], ["User Groups", 0], ["Activity", 0], ["Analyses", 1], ["Data loading", 1], ["Trash", 0],
];

export default function App() {
  return (
    <Screen>
      <Global />
      <TabStrip>
        <TabShapes width="640" height="29">
          <path d="M394 28.5L405 1.5H586L598 28.5Z" fill="#b9c2ce" stroke="#587299" />
          <path d="M204 28.5L213 1.5H393Q395 1.5 405 28.5Z" fill="#b9c2ce" stroke="#587299" />
          <path d="M4 29L17 3Q18 1.5 20 1.5H196Q198 1.5 199 3L212 29Z" fill="#f2f2f2" stroke="#587299" />
          <path d="M597 8H622L629 23.5H603Z" fill="#b3bfcf" stroke="#587299" />
        </TabShapes>
        <Tabs>
          <Tab $w={192} $ls={-0.25}>
            <svg width="16" height="16" viewBox="0 0 16 16"><rect width="16" height="16" fill="#fff" /><path d="M8 2.5A3.5 3.5 0 1 0 8 7" fill="none" stroke="#444" strokeWidth="1.5" /><path d="M7 6L12 11" stroke="#5a9a6a" /><path d="M14.5 10A3.5 3 0 1 0 14.5 13.5V12.5H12" fill="none" stroke="#1e4a3a" strokeWidth="1.6" /></svg>
            <TabTitle $w={134}>CoGe: My Data</TabTitle><Cross s={9} c="#4a4a4a" w={1.6} />
          </Tab>
          <Tab $w={194} $ls={-0.2}>
            <svg width="17" height="17" viewBox="0 0 16 16"><path d="M8 0A8 8 0 0 0 5.5 15.6V13C3 13.5 2.5 12 2 11.3C3.5 11 3.8 12.3 5.5 11.8C5.6 11.3 5.8 11 6 10.7C4 10.4 3 9.3 3 7.2C3 6.3 3.3 5.6 3.8 5C3.7 4.5 3.6 3.8 3.9 3C4.7 3 5.4 3.5 6 3.9C7.3 3.6 8.7 3.6 10 3.9C10.6 3.5 11.3 3 12.1 3C12.4 3.8 12.3 4.5 12.2 5C12.7 5.6 13 6.3 13 7.2C13 9.3 12 10.4 10 10.7C10.4 11 10.5 11.6 10.5 12.3V15.6A8 8 0 0 0 8 0Z" fill="#22262b" /></svg>
            <TabTitle $w={134} $fade>mf-fish546-2016/Oyster F</TabTitle><Cross s={9} c="#4a4a4a" w={1.6} />
          </Tab>
          <Tab $w={180} $ls={-0.3}>
            <svg width="16" height="17" viewBox="0 0 16 17"><rect width="16" height="17" fill="#dde5ee" /><path d="M3 3Q8 0 9 3T4 8Q2 10 6 9T13 5M3 14Q6 10 10 10T12 7M6 14Q12 17 14 12" fill="none" stroke="#2f5584" strokeWidth="1.6" /></svg>
            <TabTitle $w={134} $fade>NCBI Blast:Nucleotide Sea</TabTitle><Cross s={9} c="#4a4a4a" w={1.6} />
          </Tab>
        </Tabs>
        <WindowControls>
          <WinBtn $w={24} $bg="#4c6489"><svg width="10" height="10" viewBox="0 0 10 10"><circle cx="5" cy="2.5" r="2" fill="#fff" /><path d="M1 9V7.5Q1 5.5 5 5.5T9 7.5V9Z" fill="#fff" /></svg></WinBtn>
          <WinBtn $w={34}><svg width="9" height="14"><rect y="11" width="8" height="2" fill="#222" /></svg></WinBtn>
          <WinBtn $w={18}><svg width="11" height="11"><path d="M3 2.5V.5H10.5V8H8.5M.5 3H8V10.5H.5Z" fill="none" stroke="#222" /></svg></WinBtn>
          <WinBtn $w={5} />
          <WinBtn $w={45} $bg="#c75050"><Cross s={9} c="#fff" w={1.5} /></WinBtn>
        </WindowControls>
      </TabStrip>
      <Toolbar>
        <NavIcons>
          <svg width="16" height="16" viewBox="0 0 16 16"><path d="M15 8H2M8 1.5L1.5 8L8 14.5" stroke="#555" strokeWidth="2" fill="none" /></svg>
          <svg width="16" height="16" viewBox="0 0 16 16"><path d="M1 8H14M8 1.5L14.5 8L8 14.5" stroke="#ccc" strokeWidth="2" fill="none" /></svg>
          <svg width="16" height="16" viewBox="0 0 16 16"><path d="M13 4A6 6 0 1 0 13.8 9.5" stroke="#555" strokeWidth="2" fill="none" /><path d="M15 1V7.5H8.5Z" fill="#555" /></svg>
        </NavIcons>
        <Omnibox>
          <Lock w={9} h={12} c="#0b8043" />
          <Url><i>https</i>://<b>genomevolution.org</b>/coge/User.pl?p=mine</Url>
          <svg width="36" height="15" viewBox="0 0 36 15"><circle cx="6" cy="6" r="4.6" fill="none" stroke="#555" strokeWidth="1.5" /><path d="M3.8 6H8.2M9.5 9.5L13.5 13.5" stroke="#555" strokeWidth="1.5" /><path d="M28.5 1L30.4 5.4L35 5.8L31.5 8.9L32.6 13.5L28.5 11L24.4 13.5L25.5 8.9L22 5.8L26.6 5.4Z" fill="none" stroke="#555" strokeWidth="1.3" /></svg>
        </Omnibox>
        <Dots><svg width="4" height="14"><g fill="#555"><circle cx="2" cy="2" r="1.6" /><circle cx="2" cy="7" r="1.6" /><circle cx="2" cy="12" r="1.6" /></g></svg></Dots>
      </Toolbar>

      <Page>
        <PageMain>
          <Header>
            <CogeLogo />
            <SearchBox>Sear</SearchBox>
            <Account>
              <svg width="25" height="25" viewBox="0 0 25 25"><rect width="25" height="25" rx="3" fill="#d3d3d3" /><circle cx="12.5" cy="10.5" r="5.5" fill="#fff" /><path d="M3.5 25Q5 15.5 12.5 15.5T21.5 25Z" fill="#fff" /></svg>
              <Arrow d="right" s={7} c="#777" />
            </Account>
          </Header>
          <Content>
            <Sidebar>
              <NewButton>NEW</NewButton>
              {menu.map(([label, level, icon, on]) => <MenuItem key={label} $level={level} $active={on} $tall={!!icon}>{icon}{label}</MenuItem>)}
            </Sidebar>
            <Gutter><Chip $h={10} $c="#fde2a0" /><Chip $h={19} $c="#8fe63a" /></Gutter>
            <InfoPane>
              <InfoRule />
              <InfoLine $b $x={2}>id1816</InfoLine><InfoLine /><InfoLine>ster_methylation</InfoLine><InfoLine />
              <InfoLine $x={-6}>ments: 4</InfoLine><InfoLine $b $x={1}>ith access:</InfoLine><InfoLine />
              <InfoLine $b $x={-4}>n access:</InfoLine><InfoLine $x={-7} $ls={-0.13}>Middleton (mmiddleton)</InfoLine>
            </InfoPane>
          </Content>
          <Footer>
            <CogeBadge />
            <FooterText>Questions, problems, suggestions? <a>Contact us</a> or <a>Ask CyVerse</a></FooterText>
            <Sponsors>
              <Slot $w={65} $t={9}><Follow><svg width="9" height="8" viewBox="0 0 9 8"><path d="M0 7Q2 7.2 3 6.2Q1.5 6 1.3 5L2 4.9Q.5 4.5 .5 3L1.2 3.2Q0 2 .8 .6Q2.5 2.5 4.4 2.5Q4.3 0 6.3 0Q7 0 7.6 .6L8.8 .2L8.2 1.2L9 1L8.2 1.9Q8 8 2.8 7.9Q1.2 7.9 0 7" fill="#fff" /></svg>Follow</Follow></Slot>
              <Slot $w={92} $t={3}><Lions /></Slot><Slot $w={49} $t={3}><Pedia /></Slot><Slot $w={67} $t={3}><Vids /></Slot>
              <Slot $w={106} $t={4}><Moore /></Slot><Slot $w={47} $t={4}><Usda /></Slot><Slot $w={35} $t={2}><Nsf /></Slot><Slot $w={29} $t={3}><Cyverse /></Slot>
            </Sponsors>
          </Footer>
        </PageMain>
        <PageScroll><Arrow d="up" s={8} /><Thumb $w={13} $m="7px 0 6px" /><Arrow c="#999" /></PageScroll>
      </Page>

      <Taskbar>
        <Wallpaper width="1366" height="40" viewBox="0 0 1366 40">
          <defs>
            <linearGradient id="sky" x2="1" y2="0"><stop offset="0" stopColor="#6f80a0" /><stop offset=".08" stopColor="#5f759f" /><stop offset=".2" stopColor="#6c7f9f" /><stop offset=".4" stopColor="#8291ab" /><stop offset=".6" stopColor="#8e9bb3" /><stop offset=".8" stopColor="#8c99b0" /><stop offset="1" stopColor="#6c86b4" /></linearGradient>
            <filter id="soft"><feGaussianBlur stdDeviation="2" /></filter>
          </defs>
          <rect width="1366" height="40" fill="url(#sky)" />
          <g filter="url(#soft)">
            <path d="M0 0H110L50 16H0Z" fill="#8797b1" /><path d="M0 24L110 20L105 40H0Z" fill="#44608f" /><path d="M170 0H240L215 40H170Z" fill="#4d5f7b" /><path d="M240 10L215 40H330L400 6Z" fill="#8e9bb3" /><path d="M300 0H460V6L350 10Z" fill="#5b6e8e" />
            <path d="M824 0H915V4L870 3L840 5Z" fill="#56688a" /><path d="M915 0H985V17L960 8L915 6Z" fill="#647fb0" /><path d="M985 0H1100L1130 40H1010Z" fill="#87909e" /><path d="M1062 0H1090L1120 40H1010Z" fill="#9ea5af" /><path d="M1096 0H1366V14H1170Z" fill="#6b83ad" /><path d="M1180 20H1366V40H1200Z" fill="#5876a8" /><path d="M1170 0H1366V10H1180Z" fill="#8495b4" />
          </g>
          <rect width="1366" height="1" fill="#5d7a8a" />
        </Wallpaper>
        <TaskRow>
          <Task $w={51}><svg width="27" height="26" viewBox="0 0 27 26"><path d="M0 4L11.5 2V12.5H0ZM12.5 1.8L27 0V12.5H12.5ZM0 13.5H11.5V24L0 22ZM12.5 13.5H27V26L12.5 24Z" fill="#fff" /></svg></Task>
          <Task $w={59} $mr={4}><Ie /></Task>
          <Task $w={54} $mr={4} $open={0.25}><Folder /></Task>
          <Task $w={66}><Store /></Task>
          <Task $w={58}><Office c="#2a569a" l="W" /></Task>
          <Task $w={66}><Office c="#1e7145" l="X" d="grid" /></Task>
          <Task $w={58}><Office c="#d24726" l="P" d="pie" /></Task>
          <Task $w={66}><Calc /></Task>
          <Task $w={59} $mr={3} $open={0.6}><Chrome /></Task>
          <Task $w={58} $open={0.3}><NotepadPP /></Task>
          <Tray>
            <TrayApp><RedBadge /></TrayApp>
            <svg width="94" height="20" viewBox="0 0 94 20"><g fill="#fff"><path d="M7 12H15L11 8Z" /><path d="M27 4h2v3h2V4h2v5q0 2-2 2v6h-2v-6q-2 0-2-2z" /><rect x="34.5" y="5" width="6" height="12" fill="none" stroke="#fff" strokeWidth="1.5" /><rect x="36.5" y="3" width="2" height="2" /><rect x="36" y="7" width="3" height="8" /><rect x="51" y="14" width="2" height="2" /><rect x="54" y="12" width="2" height="4" /><rect x="57" y="9" width="2" height="7" /><rect x="60" y="7" width="2" height="9" /><rect x="63" y="4" width="2" height="12" /><path d="M75 8H78L82 4V16L78 12H75Z" /></g><path d="M84 7q2 3 0 6M86 5q4 5 0 10" stroke="#fff" fill="none" /></svg>
            <Clock>11:17 AM<br />11/11/2016</Clock>
          </Tray>
        </TaskRow>
      </Taskbar>

      <Dialog>
        <DialogHead>
          <div>
            <DialogTitle><Lock /><TitleGap $w={10} /><BookSolid /><TitleGap $w={3} />Week6_oyster_methylation (Experiment)</DialogTitle>
            <NewTabLink>[Open in new tab]</NewTabLink>
          </div>
          <CloseBtn><Cross s={9} c="#555" w={2.2} /></CloseBtn>
        </DialogHead>
        <DialogBody>
          <Browser>
            <MenuBar>
              <MenuEntry $w={62}>Genome</MenuEntry><MenuEntry $w={47}>Track</MenuEntry><MenuEntry $w={44}>View</MenuEntry><MenuEntry $w={40}>Help</MenuEntry>
              <Share><svg width="16" height="8" viewBox="0 0 16 8"><path d="M6 1H3a2.5 2.5 0 0 0 0 5h3M10 1h3a2.5 2.5 0 0 1 0 5h-3M5 3.5h6" stroke="#fff" strokeWidth="1.6" fill="none" /></svg>Share</Share>
            </MenuBar>
            <Overview />
            <NavBox>
              <Highlight width="868" height="26"><path d="M0 26L502 0H506L868 26Z" fill="#ccdaee" /></Highlight>
              <NavRow>
                <PanArrow /><PanArrow flip />
                <Magnifiers><Magnifier s={23} /><Magnifier s={16} /><Magnifier s={16} plus /><Magnifier s={23} plus /></Magnifiers>
                <Field $w={59}>scaffold1946</Field><Field $w={15} $mr={3}><Arrow s={8} c="#888" /></Field>
                <Field $w={180} $mr={2}>scaffold1946:71485..71698 (214 b)</Field><Field $w={24} $mr={9} $pl={5} $bg="#efefef" $c="#aaa">Go</Field>
                <Field $w={60} $bg="#f3f3f3"><svg width="14" height="14"><path d="M2 10L8 3L12 7L6 11ZM2 12H10" fill="#f3d36c" stroke="#c9ae56" /></svg></Field>
              </NavRow>
            </NavBox>
            <Ruler />
            <Tracks />
          </Browser>
          <TrackSelector>
            <FilterRow><FilterInput>filter by text</FilterInput><DropBtn><Arrow s={6} c="#777" /></DropBtn></FilterRow>
            <Shown>4 of 60 experiments shown</Shown>
            <FacetRow $mt={75} $bg="#e2e2e2" /><FacetRow $mt={3} $bg="#d9aaea">M a</FacetRow><FacetRow $mt={3} $bg="#f6f6f6">G m</FacetRow><FacetRow $mt={3} $bg="#f6f6f6">H m</FacetRow><FacetRow $mt={1} $bg="#98a997">G m</FacetRow>
          </TrackSelector>
          <InnerScroll><InnerThumb /></InnerScroll>
          <DialogScroll><Arrow d="up" /><Thumb $w={13} $m="9px 0 6px" /><Arrow c="#999" /></DialogScroll>
        </DialogBody>
      </Dialog>

      <Tip $x={424} $y={403} $w={179}>HWI-C00124:164:C7URDANXX:3:2309...</Tip>
      <Tip $x={400} $y={415} $w={178}>HWI-C00124:164:C7URDANXX:3:1104...</Tip>
      <Tip $x={413} $y={449} $w={168} $h={8}>HWI-C00124:164:C7URDANXX:3:12...</Tip>
      <Tip $x={415} $y={455} $w={179} $h={17} $lh={15}>HWI-C00124:164:C7URDANXX:3:1313...</Tip>

      <Popup>
        <PopupHead>{readId}<PopupClose><Cross s={9} c="#aaa" w={2} /></PopupClose></PopupHead>
        <PopupBody>
          <Row $h={20}><Key>Name</Key><Value>{readId}</Value></Row>
          <Row $h={19}><Key>Score</Key><Value>8</Value></Row>
          <Row $h={20}><Key>Position</Key><Value>scaffold1946:71546..71596 (+)</Value></Row>
          <Row $h={18}><Key $w={127}>Sequence and Quality</Key></Row>
          <Bases seq={line1} q={q1} /><Bases seq={line2} q={q2} /><Bases seq="T" q={["37"]} />
          <Row $h={19} $mt={2}><Key>Seq length</Key><Value>51</Value></Row>
          <Row $h={20}><Key>Cigar</Key><Value>51M</Value></Row>
          <Row $h={19}><Key>Md</Key><Value>2A9C0C19C1C13C1</Value></Row>
          <Row $h={18}><Key>Qual</Key></Row>
          <Block $h={36} $ls={-0.07}>27 14 14 14 14 33 14 14 27 27 14 33 37 37 37 14 14 27 33 33 37 27 33 14 27 37 37 27 33 37 14 22 27 14 22<br />37 33 33 37 33 27 37 33 33 27 14 22 37 27 27 37</Block>
          <Row $h={18}><Key>Seq</Key></Row>
          <Block $h={19} $ls={-0.1}>TGGCGTCGGTGGTTTAGTGGTTAGGTCGTCGGATTTTTGATCGAGAGGTTT</Block>
          <Row $h={19}><Key>UniqueID</Key><Value>{readId}</Value></Row>
          <Ok>OK</Ok>
        </PopupBody>
      </Popup>
    </Screen>
  );
}
